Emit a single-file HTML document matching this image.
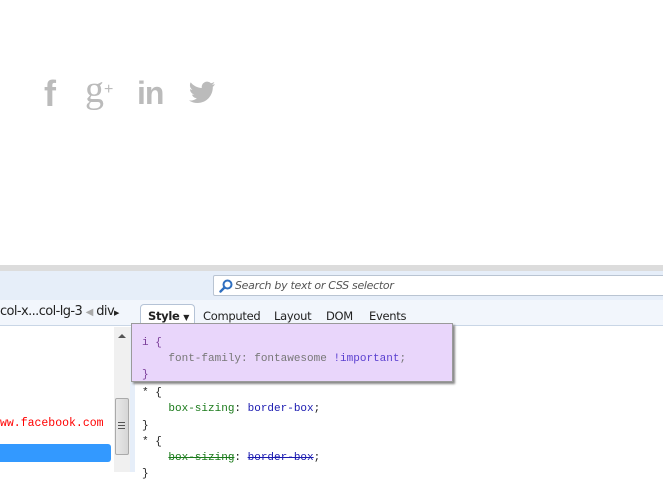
<!DOCTYPE html>
<html><head><meta charset="utf-8"><style>
*{margin:0;padding:0;box-sizing:border-box}
body{width:663px;height:472px;overflow:hidden;background:#fff;position:relative;font-family:"Liberation Sans",sans-serif}
.a{position:absolute}
.mono{font-family:"Liberation Mono","Courier New",monospace;font-size:11px}
.tab{position:absolute;top:309px;font-size:11.5px;color:#222;font-family:"DejaVu Sans","Liberation Sans",sans-serif;letter-spacing:-.3px}
</style></head><body>
<div class="a" style="left:44px;top:76px;font:bold 36px 'Liberation Sans',sans-serif;color:#bbb;line-height:36px">f</div>
<div class="a" style="left:85px;top:72px;font:38px 'Liberation Serif',serif;color:#bbb;line-height:36px">g<span style="font-size:16px;vertical-align:top;font-family:'Liberation Sans'">+</span></div>
<div class="a" style="left:137px;top:77px;font:bold 32px 'Liberation Sans',sans-serif;color:#bbb;line-height:32px;letter-spacing:-1px">in</div>
<svg class="a" style="left:188px;top:81px" width="28" height="24" viewBox="0 0 28 24"><path d="M27 3c-1 .5-2 .7-3 .8 1-.6 2-1.6 2.3-2.8-1 .6-2.1 1-3.3 1.3A5.4 5.4 0 0 0 13.8 7C9.3 6.8 5.3 4.7 2.7 1.4 1.2 4 2 7.2 4.4 8.8c-.9 0-1.7-.3-2.4-.7 0 2.6 1.8 4.8 4.3 5.3-.8.2-1.6.3-2.4.1.7 2.2 2.7 3.7 5 3.7A11 11 0 0 1 1 19.5 15.3 15.3 0 0 0 9.3 22c10 0 15.5-8.3 15.5-15.5v-.7C25.8 5.1 26.5 4.1 27 3z" fill="#bbb"/></svg>
<div class="a" style="left:0;top:265px;width:663px;height:6px;background:#dcdcdc"></div>
<div class="a" style="left:0;top:271px;width:663px;height:29px;background:#e6eef9"></div>
<div class="a" style="left:213px;top:275px;width:452px;height:21px;background:#fff;border:1px solid #b9c4d2;border-radius:2px"></div>
<svg class="a" style="left:219px;top:279px" width="14" height="14" viewBox="0 0 14 14"><circle cx="8.5" cy="5.5" r="4" fill="none" stroke="#2f6fc0" stroke-width="2"/><path d="M5.5 8.5L1.5 12.5" stroke="#2f6fc0" stroke-width="2.4" stroke-linecap="round"/></svg>
<div class="a" style="left:235px;top:279px;font:italic 11px 'DejaVu Sans','Liberation Sans',sans-serif;color:#555;letter-spacing:-.3px">Search by text or CSS selector</div>
<div class="a" style="left:0;top:300px;width:663px;height:26px;background:#f2f6fc;border-bottom:1px solid #c9d6e6"></div>
<div class="a" style="left:0;top:304px;font:13px 'DejaVu Sans','Liberation Sans',sans-serif;color:#222;letter-spacing:-.6px">col-x...col-lg-3 <span style="color:#aaa;font-size:10px">&#9664;</span> div<span style="font-size:7px">&#9654;</span></div>
<div class="a" style="left:140px;top:304px;width:55px;height:23px;background:#fff;border:1px solid #b5c3d6;border-bottom:none;border-radius:4px 4px 0 0"></div>
<div class="tab" style="left:148px;font-weight:bold">Style <span style="font-size:8px">&#9660;</span></div>
<div class="tab" style="left:203px">Computed</div>
<div class="tab" style="left:274px">Layout</div>
<div class="tab" style="left:326px">DOM</div>
<div class="tab" style="left:369px">Events</div>
<div class="a mono" style="left:0;top:417px;color:#f00;font-size:11.5px">ww.facebook.com</div>
<div class="a" style="left:0;top:444px;width:111px;height:18px;background:#3399ff;border-radius:0 3px 3px 0"></div>
<div class="a" style="left:114px;top:327px;width:16px;height:145px;background:#f0f0f0"></div>
<div class="a" style="left:118px;top:334px;width:0;height:0;border-left:4px solid transparent;border-right:4px solid transparent;border-bottom:4px solid #555"></div>
<div class="a" style="left:115px;top:398px;width:14px;height:57px;background:linear-gradient(90deg,#e8e8e8,#d6d6d6);border:1px solid #aaa;border-radius:2px"></div>
<div class="a" style="left:118px;top:422px;width:7px;height:7px;border-top:1px solid #555;border-bottom:1px solid #555"><div style="margin-top:2px;border-top:1px solid #555"></div></div>
<div class="a" style="left:130px;top:327px;width:5px;height:145px;background:#e6eef9"></div>
<div class="a mono" style="left:142px;top:385px;line-height:16.3px;color:#222;white-space:pre">* {
    <span style="color:#1a7a1a">box-sizing</span>: <span style="color:#1a1ab0">border-box</span>;
}
* {
    <span style="color:#1a7a1a;text-decoration:line-through">box-sizing</span>: <span style="color:#1a1ab0;text-decoration:line-through">border-box</span>;
}</div>
<div class="a" style="left:131px;top:323px;width:322px;height:59px;background:#e9d6fb;border:1px solid #9a9a9a;box-shadow:2px 2px 2px #888"></div>
<div class="a mono" style="left:142px;top:335px;line-height:16px;color:#7b3f9a;white-space:pre">i {
    <span style="color:#777">font-family: fontawesome</span> <span style="color:#5a3fd0">!important</span><span style="color:#777">;</span>
}</div>
</body></html>
